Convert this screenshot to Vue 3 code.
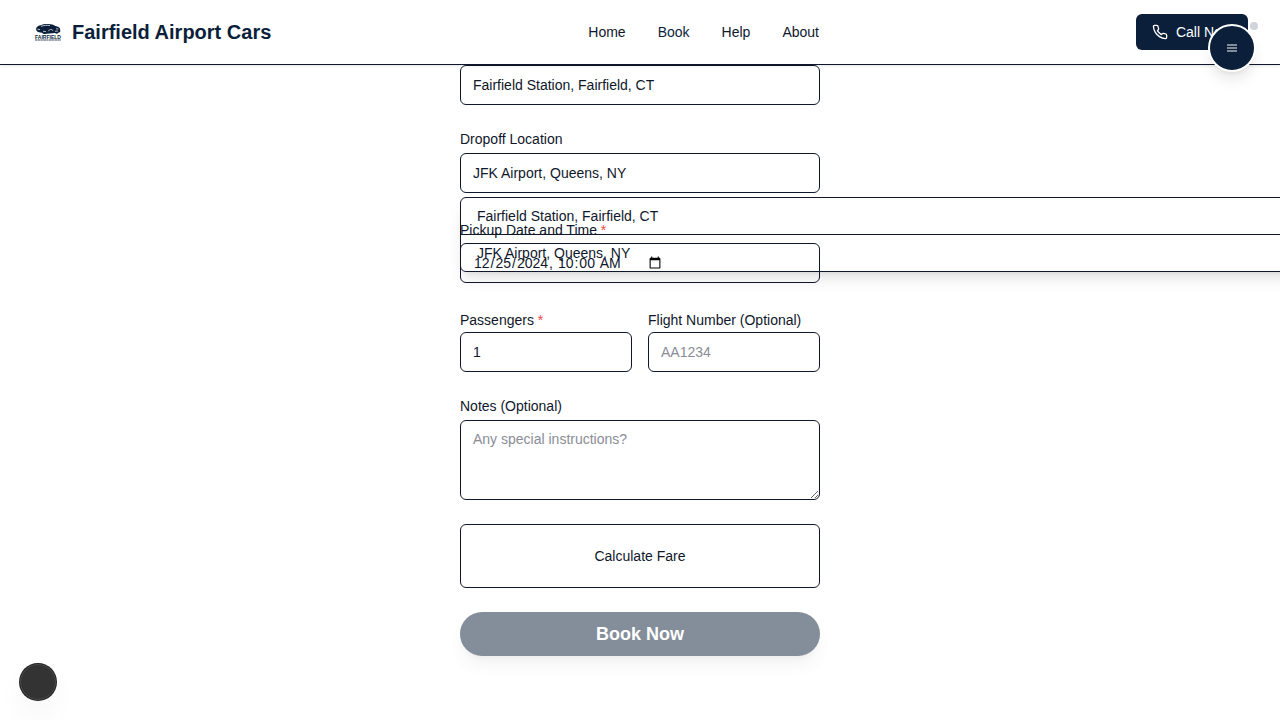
<script setup>
import { ref } from 'vue'

const links = ['Home', 'Book', 'Help', 'About']
const suggestions = ['Fairfield Station, Fairfield, CT', 'JFK Airport, Queens, NY']

const pickup = ref('Fairfield Station, Fairfield, CT')
const dropoff = ref('JFK Airport, Queens, NY')
const pickupTime = ref('2024-12-25T10:00')
const passengers = ref(1)
const flight = ref('')
const notes = ref('')
</script>

<template>
  <div class="page">
    <header class="header">
      <a class="brand" href="#">
        <svg class="logo" viewBox="0 0 32 32" aria-hidden="true">
          <path
            fill="#0b1f3a"
            d="M4.500 11.500c1-1.200 2-1.800 4-2.200 2-1 4.500-1.500 8-1.300 3 0 5 .8 7 2 2.500.5 4 1.200 4.500 2.500l.3 2.500c0 1-.8 1.700-2 1.800-1 1.200-2.500 1.200-3.200.3l-8.600.6c-1.500.8-3.500.3-4.500-1-2-.2-4.500-.7-5.200-1.700-.8-1-.8-2.500-.3-3.500z"
          />
          <path fill="none" stroke="#fff" stroke-width=".7" d="M9 10.300c3-1 6-1.200 9-.8M5.500 13.200l2.500.4M16.500 15.200c.5-2 3.500-2.500 4.500-.4M24 12.800l2.500.2M11 15.200l3 .5M23 15.300l3-.3" />
          <text x="16" y="22.500" text-anchor="middle" class="logo-name">FAIRFIELD</text>
          <path stroke="#0b1f3a" stroke-width="1" stroke-opacity=".8" stroke-dasharray="2 .4 3 .3" d="M3 24h26" />
        </svg>
        <span>Fairfield Airport Cars</span>
      </a>
      <nav class="nav">
        <a v-for="link in links" :key="link" href="#" :class="{ current: link === 'Book' }">{{ link }}</a>
      </nav>
      <button class="call" type="button">
        <svg viewBox="0 0 24 24" aria-hidden="true">
          <path
            d="M22 16.920v3a2 2 0 0 1-2.180 2 19.790 19.790 0 0 1-8.630-3.070 19.500 19.500 0 0 1-6-6 19.790 19.790 0 0 1-3.070-8.670A2 2 0 0 1 4.110 2h3a2 2 0 0 1 2 1.720 12.840 12.840 0 0 0 .7 2.810 2 2 0 0 1-.45 2.110L8.090 9.910a16 16 0 0 0 6 6l1.270-1.270a2 2 0 0 1 2.110-.45 12.840 12.840 0 0 0 2.810.7A2 2 0 0 1 22 16.920z"
          />
        </svg>
        <span>Call Now</span>
      </button>
    </header>

    <main>
      <form class="form" @submit.prevent>
        <input v-model="pickup" class="control" type="text" aria-label="Pickup Location" />

        <div class="field dropoff">
          <label for="dropoff">Dropoff Location</label>
          <input id="dropoff" v-model="dropoff" class="control" type="text" />
          <ul class="suggestions">
            <li v-for="place in suggestions" :key="place">
              <button type="button" @click="dropoff = place">{{ place }}</button>
            </li>
          </ul>
        </div>

        <div class="field required">
          <label for="time">Pickup Date and Time <span class="star">*</span></label>
          <input id="time" v-model="pickupTime" class="control" type="datetime-local" />
        </div>

        <div class="row">
          <div class="field required">
            <label for="passengers">Passengers <span class="star">*</span></label>
            <input id="passengers" v-model="passengers" class="control" type="number" min="1" />
          </div>
          <div class="field required">
            <label for="flight">Flight Number (Optional)</label>
            <input id="flight" v-model="flight" class="control" type="text" placeholder="AA1234" />
          </div>
        </div>

        <div class="field">
          <label for="notes">Notes (Optional)</label>
          <textarea id="notes" v-model="notes" class="control" placeholder="Any special instructions?"></textarea>
        </div>

        <button class="fare" type="button">Calculate Fare</button>
        <button class="book" type="submit" disabled>Book Now</button>
      </form>
    </main>

    <span class="status-dot"></span>
    <button class="menu" type="button" aria-label="Menu">
      <svg viewBox="0 0 10 8" aria-hidden="true">
        <path d="M0 1h10M0 4h10M0 7h10" />
      </svg>
    </button>
    <button class="tools" type="button" aria-label="Tools"></button>
  </div>
</template>

<style>
html,
body {
  background: #fff;
}
</style>

<style scoped>
.page,
.page * {
  box-sizing: border-box;
}

.page {
  min-height: 100vh;
  overflow: hidden;
  font: 14px/20px "Liberation Sans", Arial, sans-serif;
  color: #0f172a;
}

button,
input,
textarea {
  font: inherit;
  color: inherit;
}

a {
  color: inherit;
  text-decoration: none;
}

.header {
  position: relative;
  display: flex;
  align-items: center;
  justify-content: space-between;
  height: 65px;
  padding: 0 32px;
  border-bottom: 1px solid #0f172a;
  background: #fff;
  box-shadow: 0 1px 3px rgba(0, 0, 0, 0.1);
}

.brand {
  display: flex;
  align-items: center;
  gap: 8px;
  font-size: 20px;
  line-height: 28px;
  font-weight: 700;
  color: #0b1f3a;
}

.logo {
  width: 32px;
  height: 32px;
}

.logo-name {
  font-size: 5px;
  font-weight: 700;
  fill: #0b1f3a;
}

.nav {
  display: flex;
  gap: 32px;
}

.nav .current {
  color: #0b1f3a;
}

.call {
  display: flex;
  align-items: center;
  gap: 8px;
  height: 36px;
  padding: 0 16px;
  border: 0;
  border-radius: 6px;
  background: #0b1f3a;
  color: #fff;
}

.call svg {
  width: 16px;
  height: 16px;
  fill: none;
  stroke: currentColor;
  stroke-width: 2;
  stroke-linecap: round;
  stroke-linejoin: round;
}

.form {
  display: flex;
  flex-direction: column;
  gap: 24px;
  max-width: 360px;
  margin: 0 auto;
}

.field {
  display: flex;
  flex-direction: column;
  gap: 4px;
  min-width: 0;
}

.required {
  gap: 0;
}

.required label {
  padding: 3px 0;
}

.row .required label {
  padding-bottom: 2px;
}

.star {
  color: #ef4444;
}

.control {
  display: flex;
  width: 100%;
  height: 40px;
  margin: 0;
  padding: 8px 12px;
  border: 1px solid #0f172a;
  border-radius: 6px;
  background: #fff;
  outline: 0;
}

.control::placeholder {
  color: #8a8d96;
}

textarea.control {
  display: block;
  height: 80px;
  resize: vertical;
}

.row {
  display: grid;
  grid-template-columns: 1fr 1fr;
  gap: 16px;
}

.dropoff {
  position: relative;
}

.suggestions {
  position: absolute;
  z-index: 1;
  top: calc(100% + 4px);
  left: 0;
  width: 100vw;
  margin: 0;
  padding: 0;
  list-style: none;
  border: 1px solid #0f172a;
  border-radius: 6px;
  box-shadow: 0 10px 15px -3px rgba(0, 0, 0, 0.1), 0 4px 6px -4px rgba(0, 0, 0, 0.1);
}

.suggestions li + li {
  border-top: 1px solid #0f172a;
}

.suggestions button {
  display: block;
  width: 100%;
  padding: 8px 16px;
  border: 0;
  background: transparent;
  text-align: left;
}

.fare {
  height: 64px;
  border: 1px solid #0f172a;
  border-radius: 6px;
  background: #fff;
}

.book {
  height: 44px;
  border: 0;
  border-radius: 22px;
  background: #0b1f3a;
  color: #fff;
  font-size: 18px;
  line-height: 28px;
  font-weight: 700;
  opacity: 0.5;
  box-shadow: 0 10px 15px -3px rgba(0, 0, 0, 0.1), 0 4px 6px -4px rgba(0, 0, 0, 0.1);
}

.status-dot {
  position: fixed;
  top: 22px;
  right: 22px;
  width: 8px;
  height: 8px;
  border-radius: 50%;
  background: #d1d5db;
}

.menu {
  position: fixed;
  top: 24px;
  right: 24px;
  display: grid;
  place-items: center;
  width: 48px;
  height: 48px;
  padding: 0;
  border: 2px solid #fff;
  border-radius: 50%;
  background: #0b1f3a;
  box-shadow: 0 10px 15px -3px rgba(0, 0, 0, 0.1), 0 4px 6px -4px rgba(0, 0, 0, 0.1);
}

.menu svg {
  width: 10px;
  height: 8px;
  stroke: #a9b0bb;
  stroke-width: 1.4;
}

.tools {
  position: fixed;
  bottom: 20px;
  left: 20px;
  width: 36px;
  height: 36px;
  border: 1px solid #4a4a4a;
  border-radius: 50%;
  background: #333;
  box-shadow: 0 0 0 1px #222, 0 16px 32px -8px rgba(0, 0, 0, 0.14);
}
</style>
